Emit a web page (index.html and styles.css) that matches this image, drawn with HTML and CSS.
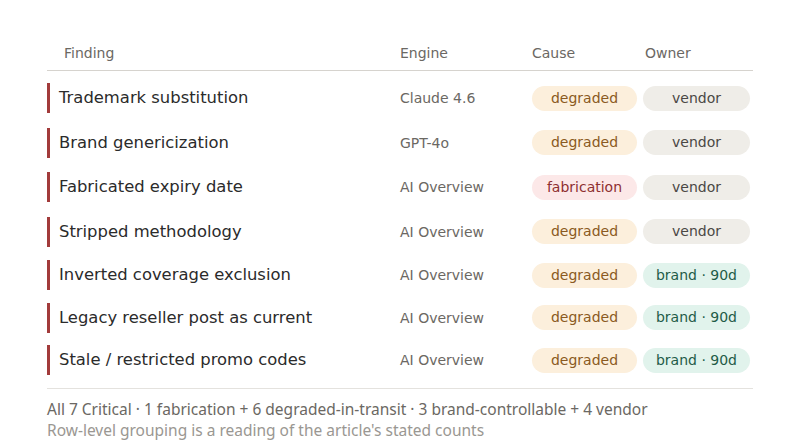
FILE: index.html
```html
<!DOCTYPE html>
<html>
<head>
<meta charset="utf-8">
<link rel="stylesheet" href="styles.css">
</head>
<body>
<div class="wrap">
  <div class="table">
    <div class="head">
      <div class="h h-finding">Finding</div>
      <div class="h">Engine</div>
      <div class="h">Cause</div>
      <div class="h h-owner">Owner</div>
    </div>
    <div class="row">
      <div class="finding">Trademark substitution</div>
      <div class="engine">Claude 4.6</div>
      <div><span class="pill cause degraded">degraded</span></div>
      <div><span class="pill owner vendor">vendor</span></div>
    </div>
    <div class="row">
      <div class="finding">Brand genericization</div>
      <div class="engine">GPT-4o</div>
      <div><span class="pill cause degraded">degraded</span></div>
      <div><span class="pill owner vendor">vendor</span></div>
    </div>
    <div class="row">
      <div class="finding">Fabricated expiry date</div>
      <div class="engine">AI Overview</div>
      <div><span class="pill cause fabrication">fabrication</span></div>
      <div><span class="pill owner vendor">vendor</span></div>
    </div>
    <div class="row">
      <div class="finding">Stripped methodology</div>
      <div class="engine">AI Overview</div>
      <div><span class="pill cause degraded">degraded</span></div>
      <div><span class="pill owner vendor">vendor</span></div>
    </div>
    <div class="row tight">
      <div class="finding">Inverted coverage exclusion</div>
      <div class="engine">AI Overview</div>
      <div><span class="pill cause degraded">degraded</span></div>
      <div><span class="pill owner brand">brand · 90d</span></div>
    </div>
    <div class="row tight">
      <div class="finding">Legacy reseller post as current</div>
      <div class="engine">AI Overview</div>
      <div><span class="pill cause degraded">degraded</span></div>
      <div><span class="pill owner brand">brand · 90d</span></div>
    </div>
    <div class="row tight">
      <div class="finding">Stale / restricted promo codes</div>
      <div class="engine">AI Overview</div>
      <div><span class="pill cause degraded">degraded</span></div>
      <div><span class="pill owner brand">brand · 90d</span></div>
    </div>
  </div>
  <div class="foot">
    <div class="summary">All 7 Critical · 1 fabrication + 6 degraded-in-transit · 3 brand-controllable + 4 vendor</div>
    <div class="note">Row-level grouping is a reading of the article's stated counts</div>
  </div>
</div>
</body>
</html>
```

FILE: styles.css
```css
html, body {
  margin: 0;
  padding: 0;
  background: #ffffff;
}
body {
  font-family: "DejaVu Sans", sans-serif;
  color: #2b2b2b;
}
.wrap {
  width: 706px;
  margin: 0 auto;
  padding-top: 45px;
}
.head, .row {
  display: grid;
  grid-template-columns: 353px 132px 111px 110px;
  align-items: center;
}
.head {
  height: 25px;
  border-bottom: 1px solid #d6d3ce;
}
.h {
  font-size: 14px;
  color: #6b6863;
  align-self: start;
}
.h-finding {
  padding-left: 17px;
}
.h-owner {
  padding-left: 2px;
}
.table {
  padding-bottom: 6px;
  border-bottom: 1px solid #e4e2de;
}
.row {
  height: 44.5px;
}
.head + .row {
  margin-top: 5px;
}
.row.tight {
  height: 42.5px;
}
.finding {
  font-size: 16.4px;
  color: #2b2b2b;
  border-left: 3px solid #a23b3b;
  padding-left: 9px;
  height: 30px;
  line-height: 30px;
}
.engine {
  font-size: 14px;
  color: #6b6863;
}
.pill {
  display: inline-block;
  height: 25px;
  line-height: 25px;
  border-radius: 13px;
  text-align: center;
  font-size: 14px;
}
.pill.cause {
  width: 105px;
}
.pill.owner {
  width: 107px;
}
.degraded {
  background: #fcefdc;
  color: #8a5a22;
}
.fabrication {
  background: #fce8e8;
  color: #8e2f31;
}
.vendor {
  background: #efede8;
  color: #4a4844;
}
.brand {
  background: #e1f3ec;
  color: #1f5c48;
}
.foot {
  padding-top: 10px;
  font-family: "Noto Sans", sans-serif;
}
.summary {
  font-size: 15.5px;
  color: #6b6863;
  line-height: 21px;
}
.note {
  font-size: 15.5px;
  color: #9a9792;
  line-height: 21px;
}
```
